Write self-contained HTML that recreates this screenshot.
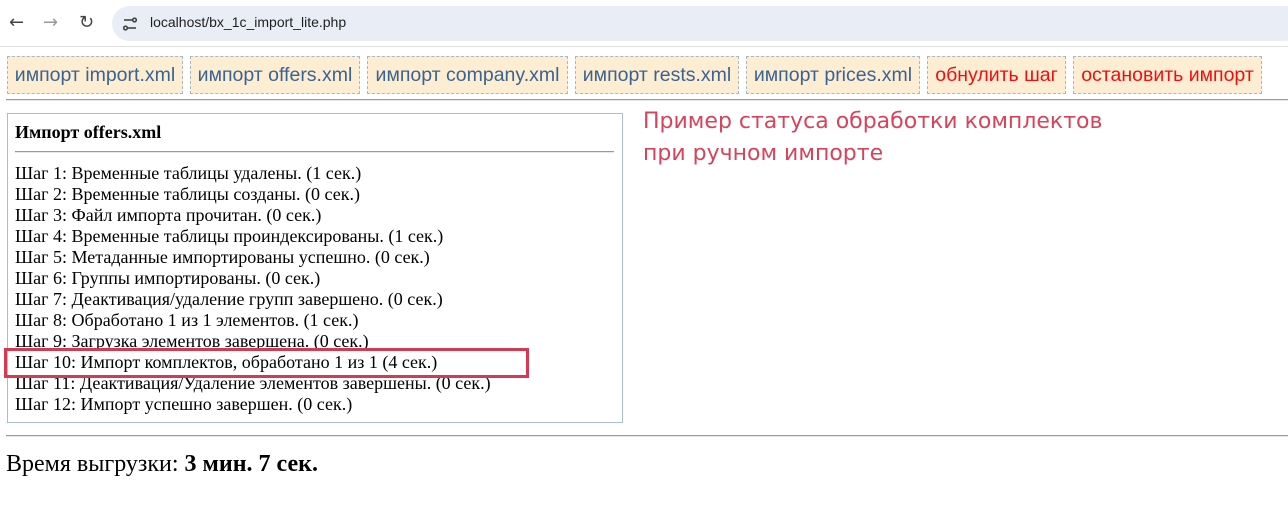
<!DOCTYPE html>
<html><head><meta charset="utf-8"><style>
*{margin:0;padding:0;box-sizing:border-box}
body{width:1288px;height:515px;background:#fff;position:relative;overflow:hidden;font-family:"Liberation Serif",serif}
.bar{position:absolute;left:0;top:0;width:1288px;height:47px;background:#fff;border-bottom:1px solid #dfe1e5}
.url{position:absolute;left:112px;top:6px;width:1190px;height:35px;border-radius:18px;background:#e9edf6}
.url span{position:absolute;left:38px;top:8px;font:14px "Liberation Sans",sans-serif;color:#1f1f1f}
.ic{position:absolute;top:14px;font:18px "DejaVu Sans",sans-serif;color:#444;line-height:18px}
.btn{position:absolute;top:56px;height:38px;background:#fdedd3;border:1px dashed #a9b7c6;font:19.5px "Liberation Sans",sans-serif;color:#3a6490;text-align:center;line-height:37px;white-space:nowrap}
.red{color:#f20d0d}
.hr{position:absolute;height:0;border-top:1px solid #9a9a9a;border-bottom:1px solid #e6e6e6}
.box{position:absolute;left:7px;top:113px;width:616px;height:310px;border:1px solid #a9bfd1}
.t{position:absolute;left:15px;font-size:18px;color:#000;white-space:nowrap}
.ann{position:absolute;left:643px;font:22px "DejaVu Sans",sans-serif;color:#d9435a;white-space:nowrap}
</style></head><body>
<div class="bar">
<div class="ic" style="left:9px">←</div>
<div class="ic" style="left:43px;color:#999">→</div>
<div class="ic" style="left:79px">↻</div>
<div class="url"><svg style="position:absolute;left:10px;top:10px" width="16" height="16" viewBox="0 0 16 16" fill="none" stroke="#444" stroke-width="1.6"><line x1="2" y1="4" x2="10" y2="4"/><circle cx="12.5" cy="4" r="1.8"/><line x1="6" y1="12" x2="14" y2="12"/><circle cx="3.5" cy="12" r="1.8"/></svg><span>localhost/bx_1c_import_lite.php</span></div>
</div>
<div class="btn" style="left:7px;width:176px">импорт import.xml</div>
<div class="btn" style="left:190px;width:170px">импорт offers.xml</div>
<div class="btn" style="left:367px;width:201px">импорт company.xml</div>
<div class="btn" style="left:575px;width:164px">импорт rests.xml</div>
<div class="btn" style="left:746px;width:174px">импорт prices.xml</div>
<div class="btn red" style="left:927px;width:139px">обнулить шаг</div>
<div class="btn red" style="left:1073px;width:189px">остановить импорт</div>
<div class="hr" style="left:6px;top:99px;width:1282px"></div>
<div class="box"></div>
<div class="t" style="top:122px;font-weight:bold">Импорт offers.xml</div>
<div class="hr" style="left:15px;top:151px;width:599px"></div>
<div class="t" style="top:163px;line-height:21px">Шаг 1: Временные таблицы удалены. (1 сек.)<br>Шаг 2: Временные таблицы созданы. (0 сек.)<br>Шаг 3: Файл импорта прочитан. (0 сек.)<br>Шаг 4: Временные таблицы проиндексированы. (1 сек.)<br>Шаг 5: Метаданные импортированы успешно. (0 сек.)<br>Шаг 6: Группы импортированы. (0 сек.)<br>Шаг 7: Деактивация/удаление групп завершено. (0 сек.)<br>Шаг 8: Обработано 1 из 1 элементов. (1 сек.)<br>Шаг 9: Загрузка элементов завершена. (0 сек.)<br>Шаг 10: Импорт комплектов, обработано 1 из 1 (4 сек.)<br>Шаг 11: Деактивация/Удаление элементов завершены. (0 сек.)<br>Шаг 12: Импорт успешно завершен. (0 сек.)</div>
<div style="position:absolute;left:4px;top:348px;width:525px;height:30px;border:3px solid #d43a52"></div>
<div class="ann" style="top:109px">Пример статуса обработки комплектов</div>
<div class="ann" style="top:141px">при ручном импорте</div>
<div class="hr" style="left:6px;top:435px;width:1282px"></div>
<div class="t" style="left:6px;top:451px;font-size:24px">Время выгрузки: <b>3 мин. 7 сек.</b></div>
</body></html>
